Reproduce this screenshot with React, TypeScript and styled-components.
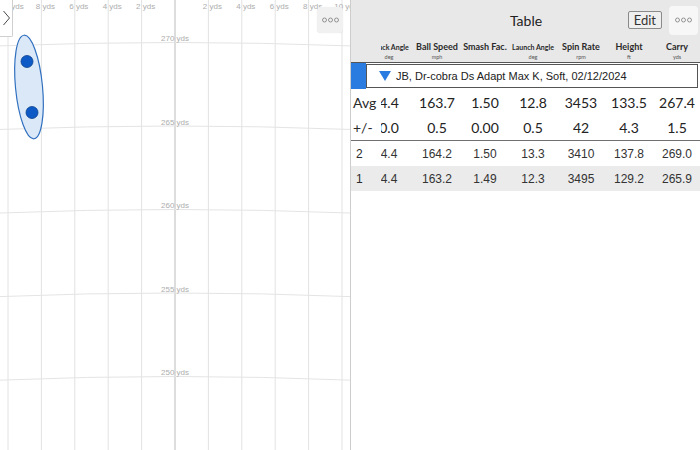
import React from 'react';
import styled, { createGlobalStyle } from 'styled-components';

const GlobalStyle = createGlobalStyle`
  html, body {
    margin: 0;
    padding: 0;
    background: #ffffff;
    overflow: hidden;
  }
  body {
    font-family: Lato, 'Liberation Sans', sans-serif;
  }
  * {
    box-sizing: border-box;
  }
`;

const Screen = styled.div`
  display: flex;
  width: 700px;
  height: 450px;
  overflow: hidden;
`;

/* ---------- dispersion map ---------- */

const MapPane = styled.div`
  position: relative;
  width: 350px;
  height: 450px;
  flex-shrink: 0;
  background: #ffffff;

  svg {
    display: block;
  }
`;

const SideTab = styled.button`
  position: absolute;
  top: 0;
  left: 0;
  width: 13px;
  height: 37px;
  padding: 0;
  border: none;
  border-right: 1px solid #cfcfcf;
  border-bottom: 1px solid #cfcfcf;
  border-bottom-right-radius: 2px;
  background: #ffffff;
  display: flex;
  align-items: center;
  justify-content: center;
`;

const MoreButton = styled.button<{ $size: number; $floating?: boolean }>`
  ${(p) => (p.$floating ? 'position: absolute; top: 7px; right: 7px;' : '')}
  width: ${(p) => p.$size}px;
  height: ${(p) => p.$size}px;
  padding: 0;
  border: none;
  border-radius: 4px;
  background: ${(p) => (p.$floating ? '#f1f1f1' : '#f7f7f7')};
  box-shadow: ${(p) => (p.$floating ? '0 0 1px rgba(0,0,0,0.15)' : 'none')};
  display: flex;
  align-items: center;
  justify-content: center;
`;

const Dots = () => (
  <svg width="17" height="6" viewBox="0 0 17 6">
    {[2.5, 8.5, 14.5].map((x) => (
      <circle key={x} cx={x} cy={3} r={2} fill="none" stroke="#7d7d7d" strokeWidth={0.8} />
    ))}
  </svg>
);

const PX_PER_YD = 16.7;
const CX = 175;
const Y270 = 42.5;
const CY = Y270 + 270 * PX_PER_YD;

const arcY = (d: number, x: number) => {
  const r = d * PX_PER_YD;
  return CY - Math.sqrt(r * r - (x - CX) * (x - CX));
};

const DispersionMap = () => {
  const columns = [-5, -4, -3, -2, -1, 0, 1, 2, 3, 4, 5];
  const distances = [270, 265, 260, 255, 250];
  return (
    <svg width="350" height="450" viewBox="0 0 350 450">
      {columns.map((k) => {
        const x = CX + k * 2 * PX_PER_YD;
        return (
          <line
            key={k}
            x1={x}
            x2={x}
            y1={0}
            y2={450}
            stroke={k === 0 ? '#d5d5d5' : '#e2e2e2'}
            strokeWidth={k === 0 ? 1.6 : 1}
          />
        );
      })}
      {distances.map((d) => {
        const r = d * PX_PER_YD;
        return (
          <path
            key={d}
            d={`M 0 ${arcY(d, 0)} A ${r} ${r} 0 0 1 350 ${arcY(d, 350)}`}
            fill="none"
            stroke="#e4e4e4"
            strokeWidth={1}
          />
        );
      })}
      <g fontFamily="'Liberation Sans', Arial, sans-serif" fontSize="8" fill="#adadad" textAnchor="middle">
        {columns
          .filter((k) => k !== 0)
          .map((k) => (
            <text key={k} x={CX + k * 2 * PX_PER_YD + 4} y={9}>
              {Math.abs(k) * 2} yds
            </text>
          ))}
        {distances.map((d) => (
          <text key={d} x={CX} y={arcY(d, CX) - 1.5}>
            {d} yds
          </text>
        ))}
      </g>
      <ellipse
        cx={29}
        cy={87}
        rx={13.5}
        ry={52}
        transform="rotate(-5.5 29 87)"
        fill="#dbe8f8"
        stroke="#3070bf"
        strokeWidth={1.2}
      />
      <circle cx={27} cy={61.5} r={6} fill="#0d5ac6" stroke="#0a3f8c" strokeWidth={0.8} />
      <circle cx={32} cy={112.5} r={6} fill="#0d5ac6" stroke="#0a3f8c" strokeWidth={0.8} />
    </svg>
  );
};

/* ---------- table ---------- */

const TablePane = styled.div`
  flex: 1;
  display: flex;
  flex-direction: column;
  border-left: 1px solid #cdcdcd;
  background: #ffffff;
`;

const Header = styled.div`
  background: #e8e8e8;
`;

const TitleBar = styled.div`
  display: grid;
  grid-template-columns: 1fr auto 1fr;
  align-items: center;
  height: 40px;
`;

const Title = styled.div`
  grid-column: 2;
  font-family: Lato, sans-serif;
  font-size: 14px;
  color: #222222;
`;

const Actions = styled.div`
  grid-column: 3;
  justify-self: end;
  display: flex;
  align-items: center;
  gap: 7px;
  padding-right: 3px;
`;

const EditButton = styled.button`
  height: 18px;
  padding: 0 5px;
  border: 1px solid #8a8a8a;
  border-radius: 2px;
  background: #efefef;
  font-family: Lato, sans-serif;
  font-size: 13px;
  line-height: 16px;
  color: #333333;
`;

const Row = styled.div<{ $height: number; $shade?: boolean; $rule?: boolean }>`
  display: flex;
  height: ${(p) => p.$height}px;
  background: ${(p) => (p.$shade ? '#ebebeb' : 'transparent')};
  border-bottom: ${(p) => (p.$rule ? '1px solid #707070' : 'none')};
`;

const RowLabel = styled.div<{ $big?: boolean }>`
  width: 30px;
  flex-shrink: 0;
  display: flex;
  align-items: center;
  padding-left: ${(p) => (p.$big ? 2 : 5)}px;
  font-family: ${(p) => (p.$big ? 'Lato' : "'Liberation Sans'")}, sans-serif;
  font-size: ${(p) => (p.$big ? 14 : 12)}px;
  color: #2a2a2a;
  white-space: nowrap;
`;

const Viewport = styled.div`
  flex: 1;
  overflow: hidden;
`;

const Track = styled.div`
  display: flex;
  height: 100%;
  margin-left: -16px;
`;

const HeadCell = styled.div`
  width: 48px;
  flex-shrink: 0;
  display: flex;
  flex-direction: column;
  align-items: center;
  padding-top: 2px;
  white-space: nowrap;
`;

const HeadName = styled.div<{ $small?: boolean }>`
  height: 10px;
  line-height: 10px;
  font-family: Lato, sans-serif;
  font-weight: 700;
  font-size: ${(p) => (p.$small ? 7 : 9)}px;
  color: #2a2a2a;
`;

const HeadUnit = styled.div`
  margin-top: 2px;
  height: 6px;
  line-height: 6px;
  font-family: Lato, sans-serif;
  font-size: 5.5px;
  color: #555555;
`;

const Cell = styled.div<{ $big?: boolean }>`
  width: 48px;
  flex-shrink: 0;
  display: flex;
  align-items: center;
  justify-content: center;
  font-family: ${(p) => (p.$big ? 'Lato' : "'Liberation Sans'")}, sans-serif;
  font-size: ${(p) => (p.$big ? 14 : 12)}px;
  color: ${(p) => (p.$big ? '#222222' : '#333333')};
  white-space: nowrap;
`;

const SelectorRow = styled.div`
  display: flex;
  height: 27px;
  border-top: 1px solid #555555;
  padding-right: 3px;
`;

const SelectorTab = styled.div`
  width: 15px;
  background: #2a7ce0;
`;

const Picker = styled.div`
  flex: 1;
  display: flex;
  align-items: center;
  gap: 5px;
  margin: 1px 0;
  padding-left: 12px;
  border: 1px solid #555555;
  background: #ffffff;
  font-family: 'Liberation Sans', Arial, sans-serif;
  font-size: 11px;
  color: #222222;
  white-space: nowrap;
`;

const Spacer = styled.div`
  flex: 1;
  background: #ffffff;
`;

type Column = {
  name: string;
  unit: string;
  small?: boolean;
  avg: string;
  dev: string;
  shots: [string, string];
};

const columns: Column[] = [
  { name: 'Attack Angle', unit: 'deg', small: true, avg: '4.4', dev: '0.0', shots: ['4.4', '4.4'] },
  { name: 'Ball Speed', unit: 'mph', avg: '163.7', dev: '0.5', shots: ['164.2', '163.2'] },
  { name: 'Smash Fac.', unit: '', avg: '1.50', dev: '0.00', shots: ['1.50', '1.49'] },
  { name: 'Launch Angle', unit: 'deg', small: true, avg: '12.8', dev: '0.5', shots: ['13.3', '12.3'] },
  { name: 'Spin Rate', unit: 'rpm', avg: '3453', dev: '42', shots: ['3410', '3495'] },
  { name: 'Height', unit: 'ft', avg: '133.5', dev: '4.3', shots: ['137.8', '129.2'] },
  { name: 'Carry', unit: 'yds', avg: '267.4', dev: '1.5', shots: ['269.0', '265.9'] },
];

const shotRows = [
  { label: '2', index: 0 },
  { label: '1', index: 1 },
];

const App: React.FC = () => {
  return (
    <>
      <GlobalStyle />
      <Screen>
        <MapPane>
          <DispersionMap />
          <SideTab aria-label="Open side panel">
            <svg width="9" height="16" viewBox="0 0 9 16">
              <polyline points="1.5,1 7.5,8 1.5,15" fill="none" stroke="#4a4a4a" strokeWidth={1} />
            </svg>
          </SideTab>
          <MoreButton $size={26} $floating aria-label="More">
            <Dots />
          </MoreButton>
        </MapPane>

        <TablePane>
          <Header>
            <TitleBar>
              <Title>Table</Title>
              <Actions>
                <EditButton>Edit</EditButton>
                <MoreButton $size={29} aria-label="More">
                  <Dots />
                </MoreButton>
              </Actions>
            </TitleBar>
            <Row $height={22}>
              <RowLabel />
              <Viewport>
                <Track>
                  {columns.map((c) => (
                    <HeadCell key={c.name}>
                      <HeadName $small={c.small}>{c.name}</HeadName>
                      <HeadUnit>{c.unit}</HeadUnit>
                    </HeadCell>
                  ))}
                </Track>
              </Viewport>
            </Row>
          </Header>

          <SelectorRow>
            <SelectorTab />
            <Picker>
              <svg width="12" height="10" viewBox="0 0 12 10">
                <polygon points="0,0 12,0 6,10" fill="#2a7ce0" />
              </svg>
              JB, Dr-cobra Ds Adapt Max K, Soft, 02/12/2024
            </Picker>
          </SelectorRow>

          <Row $height={26}>
            <RowLabel $big>Avg</RowLabel>
            <Viewport>
              <Track>
                {columns.map((c) => (
                  <Cell key={c.name} $big>
                    {c.avg}
                  </Cell>
                ))}
              </Track>
            </Viewport>
          </Row>
          <Row $height={26} $rule>
            <RowLabel $big>+/-</RowLabel>
            <Viewport>
              <Track>
                {columns.map((c) => (
                  <Cell key={c.name} $big>
                    {c.dev}
                  </Cell>
                ))}
              </Track>
            </Viewport>
          </Row>

          {shotRows.map((r) => (
            <Row key={r.label} $height={25} $shade={r.index === 1}>
              <RowLabel>{r.label}</RowLabel>
              <Viewport>
                <Track>
                  {columns.map((c) => (
                    <Cell key={c.name}>{c.shots[r.index]}</Cell>
                  ))}
                </Track>
              </Viewport>
            </Row>
          ))}
          <Spacer />
        </TablePane>
      </Screen>
    </>
  );
};

export default App;
